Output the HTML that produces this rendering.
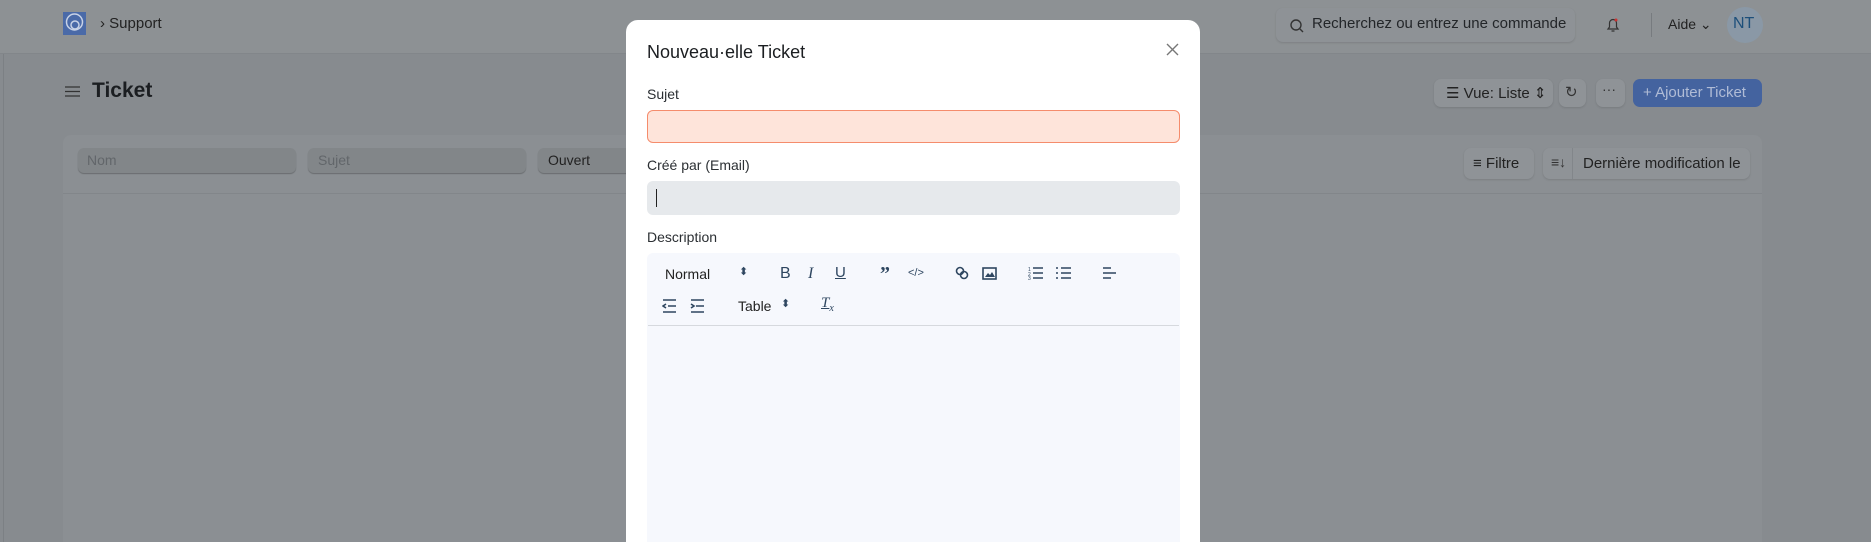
<!DOCTYPE html>
<html style="width:1871px;height:542px;overflow:hidden"><head><meta charset="utf-8"><style>
*{box-sizing:border-box;margin:0;padding:0}
body{width:1871px;height:542px;overflow:hidden;background:#878b8f;font-family:"Liberation Sans",sans-serif;position:relative;color:#1f2328}
.a{position:absolute}
.hdr{left:0;top:0;width:1871px;height:54px;background:#8d9194;border-bottom:1px solid #82868a}
.t{white-space:nowrap}
.btn{background:#8f9397;border-radius:7px;box-shadow:0 1px 2px rgba(0,0,0,.12)}
.inp{background:#828689;border-radius:6px;box-shadow:0 1px 1px rgba(0,0,0,.25)}
.modal{left:626px;top:20px;width:574px;height:522px;background:#fff;border-radius:12px 12px 0 0}
.lbl{font-size:14px;color:#2b2f33}
.ic{stroke:#2e4660;fill:none;stroke-width:1.6}
</style></head><body>
<div class="a hdr"></div>
<div class="a" style="left:3px;top:54px;width:1px;height:488px;background:#7c8084"></div>
<div class="a" style="left:63px;top:12px;width:23px;height:23px;background:#4a6aa8"></div>
<svg class="a" style="left:63px;top:12px" width="23" height="23"><circle cx="11.5" cy="10" r="8" stroke="#c8d2e6" stroke-width="1.5" fill="none"/><circle cx="12" cy="13" r="4" stroke="#c8d2e6" stroke-width="1.5" fill="none"/></svg>
<div class="a t" style="left:100px;top:15px;font-size:15px;color:#222">›&nbsp;Support</div>
<div class="a btn" style="left:1276px;top:8px;width:299px;height:34px;background:#8e9296"></div>
<svg class="a" style="left:1289px;top:18px" width="16" height="16"><circle cx="7" cy="7" r="5" stroke="#333" stroke-width="1.4" fill="none"/><path d="M11 11l3 3" stroke="#333" stroke-width="1.4"/></svg>
<div class="a t" style="left:1312px;top:15px;font-size:15px;color:#232629">Recherchez ou entrez une commande</div>
<svg class="a" style="left:1605px;top:16px" width="16" height="18"><path d="M3 13h10l-1.5-2V7a3.5 3.5 0 0 0-7 0v4z M6.5 15h3" stroke="#333" stroke-width="1.2" fill="none"/><circle cx="11" cy="4" r="1.5" fill="#c33"/></svg>
<div class="a" style="left:1651px;top:13px;width:1px;height:24px;background:#777b7f"></div>
<div class="a t" style="left:1668px;top:16px;font-size:14px;color:#222">Aide ⌄</div>
<div class="a" style="left:1727px;top:7px;width:36px;height:36px;border-radius:50%;background:#8a98a6"></div>
<div class="a t" style="left:1733px;top:15px;font-size:16px;color:#1d4f7a">NT</div>
<svg class="a" style="left:65px;top:85px" width="15" height="13"><path d="M0 2h15M0 6.5h15M0 11h15" stroke="#333" stroke-width="1.3"/></svg>
<div class="a t" style="left:92px;top:79px;font-size:21px;font-weight:bold;color:#1b1e21">Ticket</div>
<div class="a btn" style="left:1434px;top:79px;width:119px;height:28px"></div>
<div class="a t" style="left:1446px;top:84px;font-size:15px;color:#222">☰ Vue: Liste ⇕</div>
<div class="a btn" style="left:1559px;top:79px;width:27px;height:28px"></div>
<div class="a t" style="left:1565px;top:83px;font-size:15px;color:#333">↻</div>
<div class="a btn" style="left:1596px;top:79px;width:29px;height:28px"></div>
<div class="a t" style="left:1602px;top:81px;font-size:14px;color:#333">···</div>
<div class="a" style="left:1633px;top:79px;width:129px;height:28px;background:#44639f;border-radius:7px"></div>
<div class="a t" style="left:1643px;top:84px;font-size:15px;color:#b0bcd6">+ Ajouter Ticket</div>
<div class="a" style="left:63px;top:135px;width:1699px;height:407px;background:#8b8f93;border-radius:8px 8px 0 0"></div>
<div class="a" style="left:63px;top:193px;width:1699px;height:1px;background:#82868a"></div>
<div class="a inp" style="left:78px;top:148px;width:218px;height:25px"></div>
<div class="a t" style="left:87px;top:152px;font-size:14px;color:#62666a">Nom</div>
<div class="a inp" style="left:308px;top:148px;width:218px;height:25px"></div>
<div class="a t" style="left:318px;top:152px;font-size:14px;color:#62666a">Sujet</div>
<div class="a inp" style="left:538px;top:148px;width:100px;height:25px"></div>
<div class="a t" style="left:548px;top:152px;font-size:14px;color:#222">Ouvert</div>
<div class="a btn" style="left:1464px;top:148px;width:70px;height:31px"></div>
<div class="a t" style="left:1473px;top:155px;font-size:15px;color:#222">≡ Filtre</div>
<div class="a btn" style="left:1543px;top:148px;width:207px;height:31px"></div>
<div class="a" style="left:1572px;top:148px;width:1px;height:31px;background:#82868a"></div>
<div class="a t" style="left:1551px;top:154px;font-size:14px;color:#333">≡↓</div>
<div class="a t" style="left:1583px;top:155px;font-size:15px;color:#222">Dernière modification le</div>

<div class="a modal"></div>
<div class="a t" style="left:647px;top:42px;font-size:18px;color:#1b1e21">Nouveau·elle Ticket</div>
<svg class="a" style="left:1166px;top:43px" width="13" height="13"><path d="M1 1l11 11M12 1L1 12" stroke="#777" stroke-width="1.4"/></svg>
<div class="a t lbl" style="left:647px;top:86px">Sujet</div>
<div class="a" style="left:647px;top:110px;width:533px;height:33px;background:#fee4da;border:1px solid #f58c6c;border-radius:6px"></div>
<div class="a t lbl" style="left:647px;top:157px">Créé par (Email)</div>
<div class="a" style="left:647px;top:181px;width:533px;height:34px;background:#e6e9ec;border-radius:6px"></div>
<div class="a" style="left:656px;top:189px;width:1px;height:18px;background:#222"></div>
<div class="a t lbl" style="left:647px;top:229px">Description</div>
<div class="a" style="left:647px;top:253px;width:533px;height:289px;background:#f6f8fd;border-radius:6px 6px 0 0"></div>
<div class="a" style="left:648px;top:325px;width:531px;height:1px;background:#d6d9de"></div>
<div class="a t" style="left:665px;top:266px;font-size:14px;color:#222">Normal</div>
<div class="a t" style="left:739px;top:265px;font-size:11px;color:#2e4660">⬍</div>
<div class="a t" style="left:780px;top:265px;font-size:16px;color:#2e4660">B</div>
<div class="a t" style="left:808px;top:265px;font-size:16px;color:#2e4660;font-style:italic;font-family:'Liberation Serif',serif">I</div>
<div class="a t" style="left:835px;top:264px;font-size:15px;color:#2e4660;text-decoration:underline">U</div>
<div class="a t" style="left:880px;top:263px;font-size:20px;font-weight:bold;color:#2e4660;font-family:'Liberation Serif',serif">”</div>
<div class="a t" style="left:908px;top:267px;font-size:11px;color:#2e4660">&lt;/&gt;</div>
<svg class="a" style="left:954px;top:265px" width="16" height="16"><circle cx="6" cy="6" r="3.5" class="ic"/><circle cx="10" cy="10" r="3.5" class="ic"/></svg>
<svg class="a" style="left:982px;top:267px" width="15" height="13"><rect x="1" y="1" width="13" height="11" class="ic"/><path d="M3 10l3-4 2 2 2-3 3 5z" fill="#2e4660"/></svg>
<svg class="a" style="left:1028px;top:266px" width="15" height="14"><path d="M5 2h10M5 7h10M5 12h10" class="ic"/><text x="0" y="5" font-size="5" fill="#2e4660">1</text><text x="0" y="10" font-size="5" fill="#2e4660">2</text><text x="0" y="14" font-size="5" fill="#2e4660">3</text></svg>
<svg class="a" style="left:1056px;top:266px" width="15" height="14"><path d="M5 2h10M5 7h10M5 12h10M0 2h2M0 7h2M0 12h2" class="ic"/></svg>
<svg class="a" style="left:1102px;top:266px" width="15" height="14"><path d="M1 2h8M1 7h13M1 12h8" class="ic"/></svg>
<svg class="a" style="left:662px;top:299px" width="15" height="14"><path d="M1 1h13M6 7h8M1 13h13M4 5l-3 2 3 2" class="ic"/></svg>
<svg class="a" style="left:690px;top:299px" width="15" height="14"><path d="M1 1h13M6 7h8M1 13h13M1 5l3 2-3 2" class="ic"/></svg>
<div class="a t" style="left:738px;top:298px;font-size:14px;color:#222">Table</div>
<div class="a t" style="left:781px;top:297px;font-size:11px;color:#2e4660">⬍</div>
<div class="a t" style="left:821px;top:295px;font-size:15px;color:#2e4660;font-style:italic;font-family:'Liberation Serif',serif"><u>T</u><sub style="font-size:10px">x</sub></div>
</body></html>
